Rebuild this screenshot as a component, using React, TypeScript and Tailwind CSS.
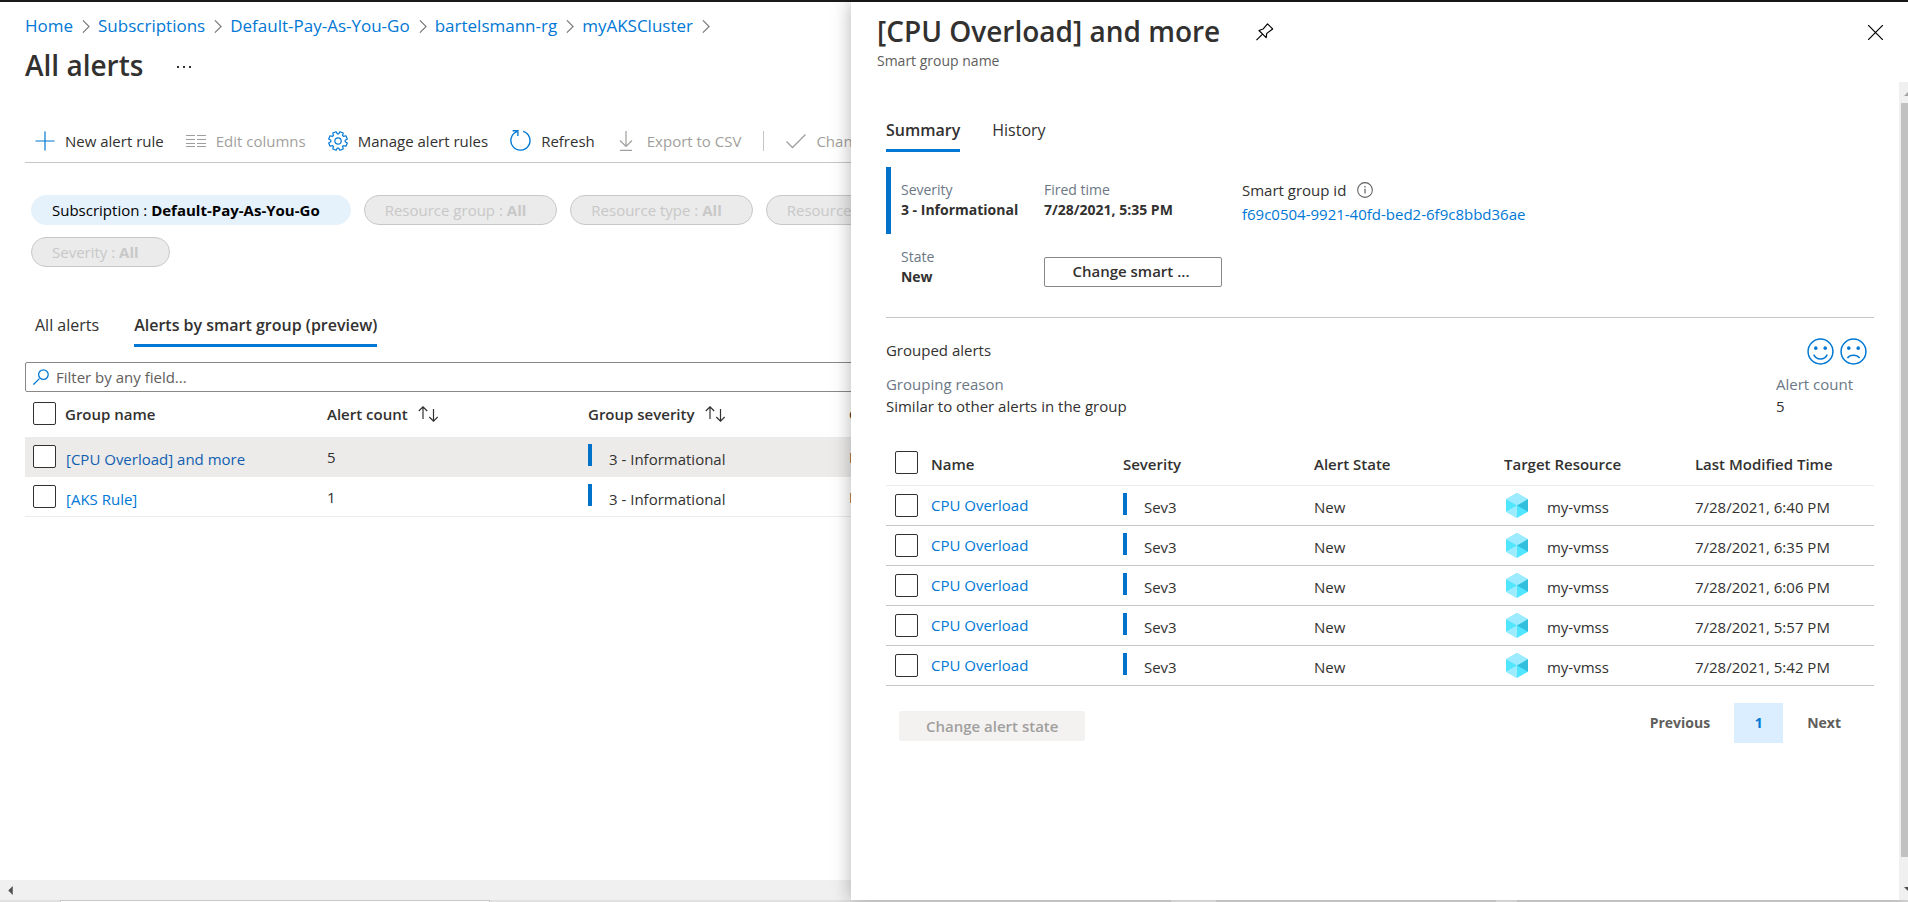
import type { ReactNode } from "react";

const crumbs = ["Home", "Subscriptions", "Default-Pay-As-You-Go", "bartelsmann-rg", "myAKSCluster"];

const groups = [
  { name: "[CPU Overload] and more", count: 5, severity: "3 - Informational", state: "New", selected: true },
  { name: "[AKS Rule]", count: 1, severity: "3 - Informational", state: "New", selected: false },
];

const alerts = ["6:40", "6:35", "6:06", "5:57", "5:42"].map((time) => ({
  name: "CPU Overload",
  severity: "Sev3",
  state: "New",
  resource: "my-vmss",
  modified: `7/28/2021, ${time} PM`,
}));

/** Outline of an eight-toothed cog on a 20x20 canvas. */
const gearPath = (() => {
  const points: string[] = [];
  for (let i = 0; i < 8; i++) {
    const offsets: [number, number][] = [
      [-0.3, 7.2],
      [-0.19, 9.5],
      [0.19, 9.5],
      [0.3, 7.2],
    ];
    for (const [da, r] of offsets) {
      const a = ((i + 0.5) * Math.PI) / 4 + da;
      points.push(`${(10 + r * Math.cos(a)).toFixed(2)} ${(10 + r * Math.sin(a)).toFixed(2)}`);
    }
  }
  return `M${points.join("L")}Z`;
})();

function Icon({ children, className }: { children: ReactNode; className: string }) {
  return (
    <svg viewBox="0 0 20 20" fill="none" stroke="currentColor" aria-hidden="true" className={`shrink-0 ${className}`}>
      {children}
    </svg>
  );
}

function Checkbox({ label }: { label: string }) {
  return (
    <input
      type="checkbox"
      aria-label={label}
      className="block size-[23px] appearance-none rounded-xs border border-[#323130] bg-white checked:bg-[#0078d4]"
    />
  );
}

function SortIcon() {
  return (
    <svg viewBox="0 0 20 16" fill="none" stroke="currentColor" strokeWidth="1.2" aria-hidden="true" className="h-4 w-5 shrink-0">
      <path d="M5 13V.8M.8 5 5 .8 9.2 5M15.500 3v12.200M11.300 11l4.200 4.200L19.700 11" />
    </svg>
  );
}

function ToolButton({ icon, label, disabled }: { icon: ReactNode; label: string; disabled?: boolean }) {
  return (
    <button
      type="button"
      disabled={disabled}
      className="flex items-center gap-[10px] whitespace-nowrap text-[#323130] disabled:text-[#a19f9d]"
    >
      {icon}
      {label}
    </button>
  );
}

function Pill({ name, value, disabled }: { name: string; value: string; disabled?: boolean }) {
  return (
    <button
      type="button"
      disabled={disabled}
      className="h-[30px] rounded-full border border-[#e5f1fb] bg-[#e5f1fb] pr-[30px] pl-5 whitespace-nowrap text-black disabled:border-[#c8c8c8] disabled:bg-[#ebebeb] disabled:text-[#c8c8c8]"
    >
      {name} : <b className="font-bold">{value}</b>
    </button>
  );
}

function VmssIcon() {
  return (
    <svg viewBox="0 0 22 25" aria-hidden="true" className="h-[25px] w-[22px] shrink-0">
      <path d="M11 0 22 6.300V18.700L11 25 0 18.700V6.300Z" fill="#50e6ff" />
      <path d="M11 0 22 6.300 11 12.600 0 6.300Z" fill="#9cebff" />
      <path d="M22 6.300V18.700L11 12.600Z" fill="#32bedd" />
      <path d="M11 12.600V25L0 18.700Z" fill="#9cebff" />
    </svg>
  );
}

function Field({ label, value }: { label: string; value: string }) {
  return (
    <div>
      <div className="text-[#6b7785]">{label}</div>
      <div className="font-bold">{value}</div>
    </div>
  );
}

function AlertsPage() {
  return (
    <main className="flex min-w-0 flex-1 flex-col overflow-hidden">
      <div className="flex w-[1100px] flex-1 flex-col pl-[25px]">
        <nav aria-label="Breadcrumb" className="flex h-12 items-center gap-[6px] text-[17px]">
          {crumbs.map((crumb) => (
            <span key={crumb} className="flex items-center gap-[6px]">
              <a href="#" className="text-[#0078d4]">{crumb}</a>
              <Icon className="size-[13px] text-[#7a7876]">
                <path d="m6 .5 9.500 9.500L6 19.500" strokeWidth="1.700" />
              </Icon>
            </span>
          ))}
        </nav>

        <div className="flex h-[30px] items-center gap-[34px]">
          <h1 className="text-[28px] font-semibold">All alerts</h1>
          <button type="button" aria-label="More" className="flex items-center gap-1 pt-1">
            <span className="size-[2px] bg-[#323130]" />
            <span className="size-[2px] bg-[#323130]" />
            <span className="size-[2px] bg-[#323130]" />
          </button>
        </div>

        <div className="mt-[39px] flex h-11 items-center gap-[22px] border-b border-[#c8c6c4] pl-[10px]">
          <ToolButton
            label="New alert rule"
            icon={<Icon className="size-5 text-[#0078d4]"><path d="M10 .5v19M.5 10h19" strokeWidth="1.200" /></Icon>}
          />
          <ToolButton
            disabled
            label="Edit columns"
            icon={<Icon className="size-5"><path d="M0 4.500h9M0 8.500h9M0 12.500h9M0 15.500h9M11 4.500h9M11 8.500h9M11 12.500h9M11 15.500h9" strokeWidth="1" /></Icon>}
          />
          <ToolButton
            label="Manage alert rules"
            icon={
              <Icon className="size-5 text-[#0078d4]">
                <path d={gearPath} strokeWidth="1.200" strokeLinejoin="round" />
                <circle cx="10" cy="10" r="3.200" strokeWidth="1.200" />
              </Icon>
            }
          />
          <ToolButton
            label="Refresh"
            icon={
              <Icon className="size-[21px] text-[#0078d4]">
                <path d="M12.500 1.300A9.100 9.100 0 1 1 6.500 1.600M2.500.7h5v5" strokeWidth="1.300" />
              </Icon>
            }
          />
          <ToolButton
            disabled
            label="Export to CSV"
            icon={<Icon className="size-5"><path d="M9 0v15.500M3 9.500l6 6 6-6M3 19.300h12" strokeWidth="1.200" /></Icon>}
          />
          <span className="h-5 w-px bg-[#c8c6c4]" />
          <ToolButton
            disabled
            label="Change state"
            icon={<Icon className="size-5"><path d="m.5 10.500 6 6L19.500 3.500" strokeWidth="1.300" /></Icon>}
          />
        </div>

        <div className="mt-8 flex flex-col gap-3 pl-[6px]">
          <div className="flex gap-[13px]">
            <Pill name="Subscription" value="Default-Pay-As-You-Go" />
            <Pill name="Resource group" value="All" disabled />
            <Pill name="Resource type" value="All" disabled />
            <Pill name="Resource" value="All" disabled />
          </div>
          <div className="flex">
            <Pill name="Severity" value="All" disabled />
          </div>
        </div>

        <div role="tablist" className="mt-[39px] flex h-[41px] gap-[35px] pl-[10px] text-[16px]">
          <button type="button" role="tab" aria-selected="false" className="border-b-3 border-transparent">All alerts</button>
          <button type="button" role="tab" aria-selected="true" className="border-b-3 border-[#0078d4] font-semibold">
            Alerts by smart group (preview)
          </button>
        </div>

        <label className="mt-[15px] flex h-[30px] items-center gap-[7px] rounded-xs border border-[#8a8886] pl-[7px]">
          <Icon className="size-4 text-[#0078d4]">
            <path d="M.5 19.500 8 12" strokeWidth="1.600" />
            <circle cx="13" cy="7" r="6" strokeWidth="1.600" />
          </Icon>
          <input
            type="text"
            aria-label="Filter by any field"
            placeholder="Filter by any field..."
            className="w-full outline-none placeholder:text-[#605e5c]"
          />
        </label>

        <table className="w-full table-fixed border-separate border-spacing-0 text-left">
          <colgroup>
            <col className="w-10" />
            <col className="w-[262px]" />
            <col className="w-[261px]" />
            <col className="w-[261px]" />
            <col />
          </colgroup>
          <thead>
            <tr className="h-[45px]">
              <th className="pb-[2px] pl-2"><Checkbox label="Select all groups" /></th>
              <th className="pb-[2px] font-semibold">Group name</th>
              <th className="pb-[2px]">
                <button type="button" className="flex items-center gap-[10px] font-semibold">Alert count <SortIcon /></button>
              </th>
              <th className="pb-[2px]">
                <button type="button" className="flex items-center gap-[10px] font-semibold">Group severity <SortIcon /></button>
              </th>
              <th className="pb-[2px] font-semibold">Group state</th>
            </tr>
          </thead>
          <tbody>
            {groups.map((g) => (
              <tr key={g.name} className={g.selected ? "h-10 bg-[#edebe9]" : "h-10"}>
                <td className="border-b border-[#edebe9] pl-2"><Checkbox label={`Select ${g.name}`} /></td>
                <td className="border-b border-[#edebe9] pt-1 pl-px">
                  <a href="#" className={g.selected ? "text-[#1060b0]" : "text-[#0078d4]"}>{g.name}</a>
                </td>
                <td className="border-b border-[#edebe9]">{g.count}</td>
                <td className="border-b border-[#edebe9]">
                  <div className="flex gap-[17px]">
                    <span className="mb-1 h-[22px] w-1 bg-[#0072c9]" />
                    <span className="pt-[5px]">{g.severity}</span>
                  </div>
                </td>
                <td className="border-b border-[#edebe9]">{g.state}</td>
              </tr>
            ))}
          </tbody>
        </table>
      </div>

      <div className="flex h-5 shrink-0 items-center bg-[#f0f0f0] pl-2">
        <svg viewBox="0 0 5 10" aria-hidden="true" className="h-[9px] w-[5px]"><path d="M5 0v10L0 5Z" fill="#505050" /></svg>
      </div>
    </main>
  );
}

function SmartGroupPanel() {
  return (
    <aside className="relative flex w-[55.4%] shrink-0 flex-col bg-white shadow-[0_0_18px_rgba(0,0,0,0.3)]">
      <header className="flex h-20 shrink-0 justify-between pr-[25px] pl-[26px]">
        <div>
          <div className="flex h-[57px] items-center gap-9">
            <h2 className="text-[28px] font-semibold">[CPU Overload] and more</h2>
            <button type="button" aria-label="Pin" className="pt-[3px]">
              <Icon className="size-[18px] text-black">
                <path
                  d="M.5 19 7.200 12.300M3.300 8.300l8 8 .7-4.800 6.500-4.900L12.800 1 7.800 6.700Z"
                  strokeWidth="1.300"
                  strokeLinejoin="round"
                />
              </Icon>
            </button>
          </div>
          <p className="-mt-2 text-[14px] leading-5 text-[#605e5c]">Smart group name</p>
        </div>
        <button type="button" aria-label="Close" className="h-[60px]">
          <Icon className="size-[15px] text-black"><path d="m0 0 20 20M20 0 0 20" strokeWidth="1.600" /></Icon>
        </button>
      </header>

      <div className="flex min-h-0 flex-1">
        <div className="min-w-0 flex-1 pr-[25px] pl-[35px]">
          <div role="tablist" className="mt-[29px] flex h-[41px] gap-8 text-[16px]">
            <button type="button" role="tab" aria-selected="true" className="border-b-3 border-[#0078d4] font-semibold">Summary</button>
            <button type="button" role="tab" aria-selected="false" className="border-b-3 border-transparent">History</button>
          </div>

          <div className="mt-[15px] grid grid-cols-[158px_198px_1fr] border-b border-[#c8c6c4] pb-[30px] text-[14px] leading-5">
            <div className="flex h-[67px] items-center border-l-5 border-[#0072c9] pb-px pl-[10px]">
              <Field label="Severity" value="3 - Informational" />
            </div>
            <div className="flex h-[67px] items-center pb-px"><Field label="Fired time" value="7/28/2021, 5:35 PM" /></div>
            <div className="pt-[13px] text-[15px]">
              <div className="flex items-center gap-[11px]">
                Smart group id
                <Icon className="size-4 text-[#605e5c]">
                  <circle cx="10" cy="10" r="9.200" strokeWidth="1.300" />
                  <path d="M10 8.500v6M10 5v1.800" strokeWidth="1.500" />
                </Icon>
              </div>
              <a href="#" className="mt-1 block text-[#0078d4]">f69c0504-9921-40fd-bed2-6f9c8bbd36ae</a>
            </div>
            <div className="flex h-[53px] items-end pl-[15px]"><Field label="State" value="New" /></div>
            <div className="pt-[23px]">
              <button type="button" className="h-[30px] w-[178px] rounded-xs border border-[#8a8886] pr-1 pb-[2px] text-[15px] font-semibold">
                Change smart ...
              </button>
            </div>
          </div>

          <div className="mt-[18px] flex h-[30px] items-center justify-between pr-[7px]">
            <h3 className="pb-[2px]">Grouped alerts</h3>
            <div className="flex gap-[6px] text-[#0078d4]">
              <button type="button" aria-label="Satisfied">
                <Icon className="size-[27px]">
                  <circle cx="10" cy="10" r="9.200" strokeWidth="1.100" />
                  <circle cx="6.500" cy="7.500" r="1.300" fill="currentColor" stroke="none" />
                  <circle cx="13.500" cy="7.500" r="1.300" fill="currentColor" stroke="none" />
                  <path d="M5 12.300c2 4.300 8 4.300 10 0" strokeWidth="1.100" />
                </Icon>
              </button>
              <button type="button" aria-label="Dissatisfied">
                <Icon className="size-[27px]">
                  <circle cx="10" cy="10" r="9.200" strokeWidth="1.100" />
                  <circle cx="6.500" cy="7.500" r="1.300" fill="currentColor" stroke="none" />
                  <circle cx="13.500" cy="7.500" r="1.300" fill="currentColor" stroke="none" />
                  <path d="M5.500 14.800c2-2.600 7-2.600 9 0" strokeWidth="1.100" />
                </Icon>
              </button>
            </div>
          </div>

          <div className="mt-[7px] flex justify-between pr-[21px] leading-[22px]">
            <div>
              <div className="text-[#6b7785]">Grouping reason</div>
              <div>Similar to other alerts in the group</div>
            </div>
            <div>
              <div className="text-[#6b7785]">Alert count</div>
              <div>5</div>
            </div>
          </div>

          <table className="mt-[23px] w-full table-fixed border-separate border-spacing-0 text-left">
            <colgroup>
              <col className="w-[45px]" />
              <col className="w-[192px]" />
              <col className="w-[191px]" />
              <col className="w-[190px]" />
              <col className="w-[191px]" />
              <col />
            </colgroup>
            <thead>
              <tr className="h-[46px]">
                <th className="border-b border-[#edebe9] pl-[9px]"><Checkbox label="Select all alerts" /></th>
                {["Name", "Severity", "Alert State", "Target Resource", "Last Modified Time"].map((h) => (
                  <th key={h} className="border-b border-[#edebe9] pt-[2px] font-semibold">{h}</th>
                ))}
              </tr>
            </thead>
            <tbody>
              {alerts.map((a) => (
                <tr key={a.modified} className="h-10">
                  <td className="border-b border-[#c8c6c4] pl-[9px]"><Checkbox label={`Select alert from ${a.modified}`} /></td>
                  <td className="border-b border-[#c8c6c4] pb-[2px]"><a href="#" className="text-[#0078d4]">{a.name}</a></td>
                  <td className="border-b border-[#c8c6c4]">
                    <div className="flex gap-[17px]">
                      <span className="mb-1 h-[22px] w-1 bg-[#0072c9]" />
                      <span className="pt-1">{a.severity}</span>
                    </div>
                  </td>
                  <td className="border-b border-[#c8c6c4] pt-[2px]">{a.state}</td>
                  <td className="border-b border-[#c8c6c4]">
                    <div className="flex items-center gap-[19px] pl-[2px]">
                      <VmssIcon />
                      <span className="pt-[2px]">{a.resource}</span>
                    </div>
                  </td>
                  <td className="border-b border-[#c8c6c4] pt-[2px]">{a.modified}</td>
                </tr>
              ))}
            </tbody>
          </table>

          <div className="mt-[17px] flex h-10 justify-between pr-[33px] pl-[13px]">
            <button type="button" disabled className="mt-2 h-[30px] rounded-xs bg-[#f3f2f1] px-[27px] font-semibold text-[#a19f9d]">
              Change alert state
            </button>
            <div className="flex items-center gap-6 text-[14px] font-bold text-[#605e5c]">
              <button type="button">Previous</button>
              <button type="button" aria-current="page" className="h-10 w-[49px] bg-[#daeeff] text-[#0078d4]">1</button>
              <button type="button">Next</button>
            </div>
          </div>
        </div>

        <div className="flex w-[9px] shrink-0 flex-col overflow-hidden bg-[#f0f0f0] pl-[2px]">
          <svg viewBox="0 0 9 21" aria-hidden="true" className="h-[21px] w-[9px] shrink-0"><path d="M3 14 8 9l5 5Z" fill="#a3a3a3" /></svg>
          <div className="flex-1 bg-[#c1c1c1]" />
          <svg viewBox="0 0 9 43" aria-hidden="true" className="h-[43px] w-[9px] shrink-0"><path d="M3 30h10l-5 5Z" fill="#505050" /></svg>
        </div>
      </div>
    </aside>
  );
}

export default function App() {
  return (
    <div className="flex h-screen min-h-[760px] flex-col overflow-hidden bg-white font-['Open_Sans','Noto_Sans',sans-serif] text-[15px] leading-5 text-[#323130]">
      <div className="h-[2px] shrink-0 bg-[#1b1a19]" />
      <div className="flex min-h-0 flex-1">
        <AlertsPage />
        <SmartGroupPanel />
      </div>
      <div className="flex h-[2px] shrink-0 bg-[#e1e1e1] pl-[60px]">
        <span className="w-[430px] border border-b-0 border-[#c8c8c8] bg-white" />
        <span className="ml-[681px] w-[45px] bg-[#f5f5f5]" />
        <span className="ml-[280px] w-[21px] bg-[#f5f5f5]" />
      </div>
    </div>
  );
}
